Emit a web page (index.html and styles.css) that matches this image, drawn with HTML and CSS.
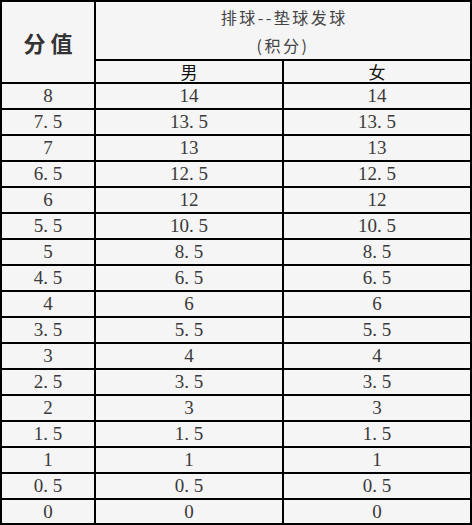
FILE: index.html
```html
<!DOCTYPE html>
<html lang="zh-CN">
<head>
<meta charset="utf-8">
<title>排球--垫球发球（积分）</title>
<link rel="stylesheet" href="styles.css">
</head>
<body>
<table class="score">
  <colgroup>
    <col class="col-label">
    <col class="col-val">
    <col class="col-val">
  </colgroup>
  <thead>
    <tr class="head-1">
      <th rowspan="2" class="label">分值</th>
      <th colspan="2" class="title">排球--垫球发球<br>(积分)</th>
    </tr>
    <tr class="head-2">
      <th class="sex">男</th>
      <th class="sex">女</th>
    </tr>
  </thead>
  <tbody>
    <tr><td>8</td><td>14</td><td>14</td></tr>
    <tr><td>7<span class="pt">.</span>5</td><td>13<span class="pt">.</span>5</td><td>13<span class="pt">.</span>5</td></tr>
    <tr><td>7</td><td>13</td><td>13</td></tr>
    <tr><td>6<span class="pt">.</span>5</td><td>12<span class="pt">.</span>5</td><td>12<span class="pt">.</span>5</td></tr>
    <tr><td>6</td><td>12</td><td>12</td></tr>
    <tr><td>5<span class="pt">.</span>5</td><td>10<span class="pt">.</span>5</td><td>10<span class="pt">.</span>5</td></tr>
    <tr><td>5</td><td>8<span class="pt">.</span>5</td><td>8<span class="pt">.</span>5</td></tr>
    <tr><td>4<span class="pt">.</span>5</td><td>6<span class="pt">.</span>5</td><td>6<span class="pt">.</span>5</td></tr>
    <tr><td>4</td><td>6</td><td>6</td></tr>
    <tr><td>3<span class="pt">.</span>5</td><td>5<span class="pt">.</span>5</td><td>5<span class="pt">.</span>5</td></tr>
    <tr><td>3</td><td>4</td><td>4</td></tr>
    <tr><td>2<span class="pt">.</span>5</td><td>3<span class="pt">.</span>5</td><td>3<span class="pt">.</span>5</td></tr>
    <tr><td>2</td><td>3</td><td>3</td></tr>
    <tr><td>1<span class="pt">.</span>5</td><td>1<span class="pt">.</span>5</td><td>1<span class="pt">.</span>5</td></tr>
    <tr><td>1</td><td>1</td><td>1</td></tr>
    <tr><td>0<span class="pt">.</span>5</td><td>0<span class="pt">.</span>5</td><td>0<span class="pt">.</span>5</td></tr>
    <tr class="last"><td>0</td><td>0</td><td>0</td></tr>
  </tbody>
</table>
</body>
</html>
```
FILE: styles.css
```css
html, body {
  margin: 0;
  padding: 0;
  background: #f5f5f5;
}

.score {
  width: 472px;
  table-layout: fixed;
  border-collapse: separate;
  border-spacing: 2px;
  background: #000;
  color: #3a3a3a;
  font-family: "Liberation Serif", "Noto Sans CJK SC", serif;
}

.col-label { width: 92px; }
.col-val { width: 186px; }

.score th,
.score td {
  background: #f5f5f5;
  padding: 0;
  text-align: center;
  vertical-align: middle;
}

.head-1 th { height: 57px; }
.head-2 th { height: 21px; }

.label {
  font-family: "Noto Sans CJK SC", sans-serif;
  font-size: 22px;
  font-weight: 700;
  letter-spacing: 5px;
  text-indent: 5px;
  color: #333;
}

.title {
  font-family: "Noto Sans CJK SC", sans-serif;
  font-size: 16px;
  font-weight: 400;
  line-height: 28px;
  letter-spacing: 2.5px;
  text-indent: 2.5px;
  color: #444;
}

.sex {
  font-family: "Noto Sans CJK SC", sans-serif;
  font-size: 17px;
  font-weight: 400;
  line-height: 21px;
  color: #111;
}

.score tbody td {
  height: 24px;
  font-size: 19px;
  line-height: 24px;
}

.score tbody .last td {
  height: 23px;
  line-height: 23px;
}

.pt {
  display: inline-block;
  width: 9.5px;
  text-align: left;
}
```
